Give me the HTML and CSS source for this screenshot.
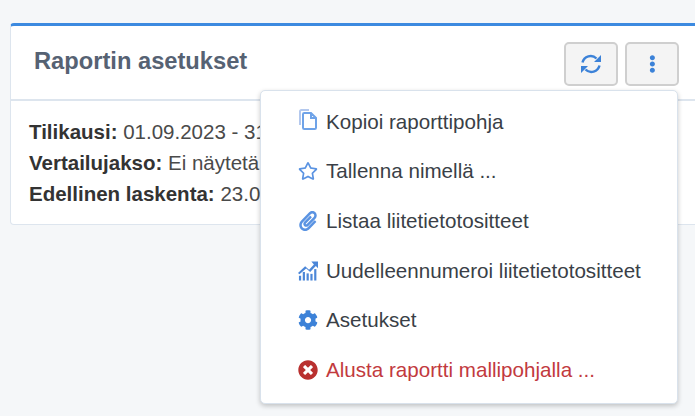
FILE: index.html
```
<!DOCTYPE html>
<html lang="fi">
<head>
<meta charset="utf-8">
<title>Raportin asetukset</title>
<link rel="stylesheet" href="styles.css">
</head>
<body>
<section class="card">
  <header class="card-header">
    <h2 class="card-title">Raportin asetukset</h2>
    <div class="tools">
      <button class="tool-btn" type="button" aria-label="Päivitä">
        <svg class="sync-icon" viewBox="0 0 22 20"><path class="sync-arc" d="M2.500 8.500A8.300 8.300 0 0 1 16.500 4.500M19.500 11.500A8.300 8.300 0 0 1 5.500 15.500"/><path class="sync-head" d="M21 1v7h-7zM1 19v-7h7z"/></svg>
      </button>
      <button class="tool-btn" type="button" aria-label="Lisää">
        <svg class="dots-icon" viewBox="0 0 192 512"><path d="M96 184c39.800 0 72 32.200 72 72s-32.200 72-72 72-72-32.200-72-72 32.200-72 72-72zM24 80c0 39.800 32.200 72 72 72s72-32.200 72-72S135.800 8 96 8 24 40.200 24 80zm0 352c0 39.800 32.200 72 72 72s72-32.200 72-72-32.200-72-72-72-72 32.200-72 72z"/></svg>
      </button>
    </div>
  </header>
  <div class="card-body">
    <p class="info"><b>Tilikausi:</b> 01.09.2023 - 31.08.2024</p>
    <p class="info"><b>Vertailujakso:</b> Ei näytetä</p>
    <p class="info"><b>Edellinen laskenta:</b> 23.08.2024</p>
  </div>
</section>

<ul class="menu">
  <li class="menu-item">
    <svg class="menu-icon copy-icon" viewBox="0 0 20 22"><path class="copy-back" d="M2 16V2.300A1.300 1.300 0 0 1 3.300 1H11"/><path d="M5 5.300A1.300 1.300 0 0 1 6.300 4H13l5 5v9.700a1.300 1.300 0 0 1-1.300 1.300H6.300A1.300 1.300 0 0 1 5 18.700zM13 4v5h5"/></svg>
    <span>Kopioi raporttipohja</span>
  </li>
  <li class="menu-item">
    <svg class="menu-icon" viewBox="0 0 576 512"><path d="M528.100 171.500L382 150.200 316.700 17.800c-11.700-23.600-45.600-23.900-57.400 0L194 150.200 47.900 171.500c-26.200 3.800-36.700 36.100-17.700 54.600l105.700 103-25 145.500c-4.500 26.300 23.200 46 46.400 33.700L288 439.600l130.700 68.700c23.200 12.200 50.900-7.400 46.400-33.700l-25-145.500 105.700-103c19-18.500 8.500-50.800-17.700-54.600zM388.600 312.300l23.700 138.400L288 385.400l-124.300 65.300 23.700-138.400-100.600-98 139-20.200 62.200-126 62.200 126 139 20.200-100.600 98z"/></svg>
    <span>Tallenna nimellä ...</span>
  </li>
  <li class="menu-item">
    <svg class="menu-icon" viewBox="0 0 448 512"><path d="M43.246 466.142c-58.430-60.289-57.341-157.511 1.386-217.581L254.392 34c44.316-45.332 116.351-45.336 160.671 0 43.890 44.894 43.943 117.329 0 162.276L232.214 383.128c-29.855 30.537-78.633 30.111-107.982-.998-28.275-29.970-27.368-77.473 1.452-106.953l143.743-146.835c6.182-6.314 16.312-6.422 22.626-.241l22.861 22.379c6.315 6.182 6.422 16.312.241 22.626L171.427 319.927c-4.932 5.045-5.236 13.428-.648 18.292 4.372 4.634 11.245 4.711 15.688.165l182.849-186.851c19.613-20.060 19.613-52.725-.011-72.798-19.189-19.627-49.957-19.637-69.154 0L90.390 293.295c-34.763 35.560-35.299 93.120-1.191 128.313 34.010 35.093 88.985 35.137 123.058.286l172.060-175.999c6.177-6.319 16.307-6.433 22.626-.256l22.877 22.364c6.319 6.177 6.434 16.307.256 22.626l-172.060 175.998c-59.576 60.938-155.943 60.216-214.770-.485z"/></svg>
    <span>Listaa liitetietotositteet</span>
  </li>
  <li class="menu-item">
    <svg class="menu-icon chart-icon" viewBox="0 0 21 20"><path d="M14 0h7v7l-2.300-2.300-5.900 6.300-4.200-3.600L1.500 13.500 0 12l7.500-6.900 4.100 3.500 5.100-5.500z"/><rect x="1" y="15" width="2.300" height="5"/><rect x="5" y="11" width="2.300" height="9"/><rect x="9" y="12.500" width="2.300" height="7.500"/><rect x="13" y="13" width="2.300" height="7"/><rect x="17" y="8" width="2.300" height="12"/></svg>
    <span>Uudelleennumeroi liitetietotositteet</span>
  </li>
  <li class="menu-item">
    <svg class="menu-icon gear-icon" viewBox="0 0 512 512"><path d="M487.400 315.700l-42.600-24.600c4.300-23.200 4.300-47 0-70.200l42.600-24.600c4.900-2.800 7.100-8.600 5.500-14-11.100-35.600-30-67.800-54.700-94.600-3.800-4.100-10-5.100-14.800-2.300L380.800 110c-17.900-15.400-38.500-27.300-60.800-35.100V25.800c0-5.600-3.900-10.500-9.400-11.700-36.700-8.200-74.300-7.800-109.200 0-5.500 1.200-9.400 6.100-9.400 11.700V75c-22.200 7.900-42.800 19.800-60.800 35.100L88.700 85.500c-4.900-2.800-11-1.900-14.800 2.300-24.700 26.700-43.600 58.900-54.700 94.600-1.700 5.400.6 11.200 5.500 14L67.300 221c-4.300 23.200-4.300 47 0 70.200l-42.600 24.600c-4.900 2.800-7.100 8.600-5.500 14 11.100 35.600 30 67.800 54.700 94.600 3.800 4.100 10 5.100 14.800 2.300l42.600-24.600c17.900 15.400 38.500 27.300 60.800 35.100v49.200c0 5.600 3.900 10.500 9.400 11.700 36.700 8.200 74.300 7.800 109.200 0 5.500-1.200 9.400-6.100 9.400-11.700v-49.200c22.200-7.900 42.800-19.800 60.800-35.100l42.600 24.600c4.900 2.800 11 1.900 14.800-2.300 24.700-26.700 43.600-58.900 54.700-94.600 1.500-5.500-.7-11.300-5.600-14.100zM256 336c-44.100 0-80-35.900-80-80s35.900-80 80-80 80 35.900 80 80-35.900 80-80 80z"/></svg>
    <span>Asetukset</span>
  </li>
  <li class="menu-item danger">
    <svg class="menu-icon" viewBox="0 0 512 512"><path d="M256 8C119 8 8 119 8 256s111 248 248 248 248-111 248-248S393 8 256 8zm121.600 313.100c4.700 4.700 4.700 12.300 0 17L338 377.600c-4.700 4.700-12.300 4.700-17 0L256 312l-65.100 65.600c-4.700 4.700-12.300 4.700-17 0L134.400 338c-4.700-4.700-4.700-12.300 0-17l65.600-65-65.600-65.100c-4.700-4.700-4.700-12.300 0-17l39.600-39.600c4.700-4.700 12.300-4.700 17 0l65 65.700 65.100-65.600c4.700-4.700 12.300-4.700 17 0l39.600 39.600c4.700 4.700 4.700 12.300 0 17L312 256l65.600 65.100z"/></svg>
    <span>Alusta raportti mallipohjalla ...</span>
  </li>
</ul>
</body>
</html>
```
FILE: styles.css
```
* { box-sizing: border-box; }
html, body { height: 100%; }
body {
  margin: 0;
  padding: 23px 0 0 10px;
  background: #f5f7f9;
  font-family: "Liberation Sans", Arial, sans-serif;
  color: #333;
  overflow: hidden;
  position: relative;
}
.card {
  width: 700px;
  background: #fff;
  border: 1px solid #dde5ee;
  border-top: 3px solid #3c8ae0;
  border-radius: 4px 0 0 4px;
}
.card-header {
  height: 75px;
  display: flex;
  align-items: center;
  justify-content: space-between;
  padding: 0 30px 0 23px;
  border-bottom: 2px solid #dde5ee;
}
.card-title {
  margin: 0 0 3px;
  font-size: 23.700px;
  font-weight: 700;
  color: #566273;
}
.tools {
  display: flex;
  gap: 7px;
  margin-top: 3px;
}
.tool-btn {
  width: 54px;
  height: 44px;
  padding: 0;
  display: flex;
  align-items: center;
  justify-content: center;
  background: #f4f4f4;
  border: 2px solid #cfcfcf;
  border-radius: 5px;
}
.sync-icon { width: 22px; height: 20px; }
.sync-arc { fill: none; stroke: #3c82d8; stroke-width: 2.400; }
.sync-head { fill: #3c82d8; }
.dots-icon { height: 18px; fill: #3c82d8; }
.card-body { padding: 15px 18px 15px; }
.info { margin: 0; font-size: 20.500px; line-height: 31px; color: #4a4a4a; }
.info b { font-weight: 700; color: #333; }
.menu {
  position: absolute;
  left: 260px;
  top: 90px;
  width: 418px;
  height: 314px;
  margin: 0;
  padding: 6px 0 0;
  list-style: none;
  background: #fff;
  border: 1px solid #d9e2ec;
  border-radius: 5px;
  box-shadow: 0 2px 5px rgba(0, 0, 0, .22);
}
.menu-item {
  display: flex;
  align-items: center;
  height: 49.6px;
  padding-left: 37px;
  gap: 8px;
  font-size: 20.600px;
  color: #3a3f47;
}
.menu-icon { width: 20px; height: 20px; fill: #5a93e2; flex: none; }
.copy-icon { height: 22px; margin-bottom: 3px; fill: none; stroke: #6fa3e8; stroke-width: 2; }
.copy-back { stroke: #b3c8ee; }
.chart-icon { fill: #4c87d8; }
.gear-icon { fill: #3c82d8; }
.danger { color: #c23a3e; }
.danger .menu-icon { fill: #b9302f; }
```
